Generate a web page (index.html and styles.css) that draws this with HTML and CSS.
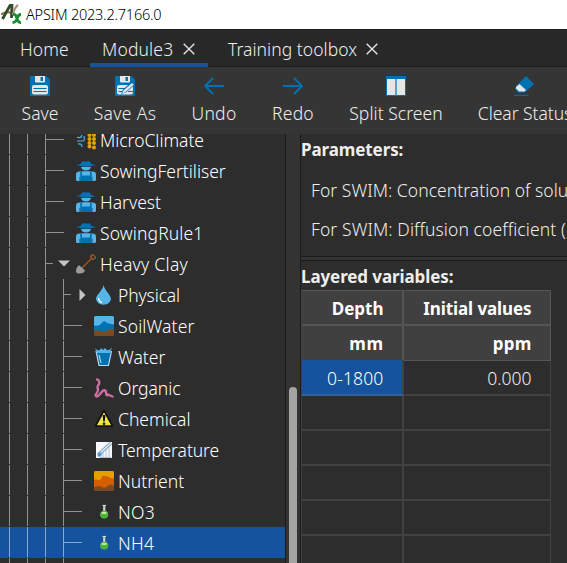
FILE: index.html
```html
<!DOCTYPE html>
<html lang="en">
<head>
<meta charset="utf-8">
<title>APSIM 2023.2.7166.0</title>
<link rel="stylesheet" href="styles.css">
</head>
<body>
<svg class="defs" width="0" height="0">
  <symbol id="farmer" viewBox="0 0 20 20">
    <path d="M0 13.500Q0 10.500 3.500 10.500L7 10.200H13L16.500 10.500Q20 10.500 20 13.500V18.500Q20 20 18.500 20H1.500Q0 20 0 18.500Z" fill="#56b4e9"/>
    <path d="M4.300 10.500H6V14.500H14V10.500H15.700V20H4.300Z" fill="#0072b2"/>
    <path d="M3.800 16V20M16.200 16V20" stroke="#2d2d2d" stroke-width=".6"/>
    <path d="M5 6H15Q14 9.600 10 9.600Q6 9.600 5 6Z" fill="#56b4e9"/>
    <path d="M0 4Q4 3.800 5 2.500Q5.300 .500 7 .300L10 .600L13 .300Q14.700 .500 15 2.500Q16 3.800 20 4Q15 5.700 10 5.700Q5 5.700 0 4Z" fill="#0072b2"/>
  </symbol>
  <symbol id="flask" viewBox="0 0 20 20">
    <path d="M9 3.500H11.500V8.500Q14.500 10 14.300 12.800Q14 16.500 10.200 16.500Q6.200 16.500 6 12.800Q6 10 9 8.500Z" fill="#8c9c91"/>
    <circle cx="10.200" cy="12.600" r="3.600" fill="#43b92c"/>
    <path d="M7.300 10.500Q10 9 13 10.500L12 12H8Z" fill="#baf095"/>
    <path d="M8.500 3.500H12" stroke="#d4d8db" stroke-width="1.200"/>
    <path d="M10.200 4.500V8.500" stroke="#d4d8db" stroke-width="1.600"/>
  </symbol>
  <symbol id="close" viewBox="0 0 12 12"><path d="M.700 .700 11.300 11.300M11.300 .700 .700 11.300" stroke="#e3e3e3" stroke-width="1.400"/></symbol>
</svg>
<div class="window">
  <header class="titlebar">
    <svg class="logo" viewBox="0 0 20 20"><path d="M0 10.500Q5 7 12 9" fill="none" stroke="#8d6b4b" stroke-width="2"/><path d="M1.500 15 9 1.500 11 .500 10.500 14" fill="none" stroke="#354a29" stroke-width="2.800"/><path d="M17 1Q13 4 12 11" fill="none" stroke="#a5947c" stroke-width="2.200"/><path d="M12 10.500Q15 10 16 14.500T20 18.500M20 10.500Q17 10.500 16 14.500T11.500 18.500" fill="none" stroke="#198c35" stroke-width="2.800"/></svg>
    <span class="t-app">APSIM 2023.2.7166.0</span>
  </header>
  <nav class="tabs">
    <div class="tab home"><span class="t-home">Home</span></div>
    <div class="tab active"><span class="t-mod">Module3</span><svg class="x"><use href="#close"/></svg></div>
    <div class="tab"><span class="t-train">Training toolbox</span><svg class="x"><use href="#close"/></svg></div>
  </nav>
  <div class="toolbar">
    <div class="tool save"><svg viewBox="0 0 20 20"><path d="M1 0H16.500L20 3.500V19Q20 20 19 20H1Q0 20 0 19V1Q0 0 1 0Z" fill="#0072b2"/><path d="M5 0H15V5.500Q15 6.500 14 6.500H6Q5 6.500 5 5.500Z" fill="#e6e6e6"/><path d="M10.500 1H13V5H10.500Z" fill="#0072b2"/><rect x="2" y="9" width="16" height="9.500" rx="2" fill="#e6e6e6"/><path d="M3.500 12.500H16.500M3.500 15.500H16.500" stroke="#0072b2" stroke-width="1"/></svg><span class="t-save">Save</span></div>
    <div class="tool saveas"><svg viewBox="0 0 20 20"><path d="M1 0H16.500L20 3.500V19Q20 20 19 20H1Q0 20 0 19V1Q0 0 1 0Z" fill="#0072b2"/><path d="M5 0H15V5.500Q15 6.500 14 6.500H6Q5 6.500 5 5.500Z" fill="#e6e6e6"/><path d="M10.500 1H13V5H10.500Z" fill="#0072b2"/><rect x="2" y="9" width="16" height="9.500" rx="2" fill="#e6e6e6"/><path d="M3.500 12.500H12M3.500 15.500H9M13 15.500H18" stroke="#0072b2"/><path d="M6 18 8 13.500 17 5.500 20 8.500 11 16.500Z" fill="#0072b2"/><path d="M7 17.500 8.500 14.500 17 7 18.700 8.700 10 16.500Z" fill="#e6e6e6"/></svg><span class="t-saveas">Save As</span></div>
    <div class="tool undo"><svg viewBox="0 0 20 20"><path d="M20 10H1M9 2 1 10 9 18" fill="none" stroke="#0072b2" stroke-width="1.800"/></svg><span class="t-undo">Undo</span></div>
    <div class="tool redo"><svg viewBox="0 0 20 20"><path d="M0 10H19M11 2 19 10 11 18" fill="none" stroke="#0072b2" stroke-width="1.800"/></svg><span class="t-redo">Redo</span></div>
    <div class="tool split"><svg viewBox="0 0 20 20"><rect width="20" height="20" rx="1" fill="#0072b2"/><path d="M1 3H19V19H1Z" fill="#e6e6e6"/><path d="M10 3V19" stroke="#5aa0cb" stroke-width="2"/></svg><span class="t-split">Split Screen</span></div>
    <div class="tool clear"><svg viewBox="0 0 20 20"><path d="M2 10 12 0 20 8 11 16.500H4L1 13Z" fill="#0072b2"/><path d="M5.500 8 12 14 10.500 15.500H5L2 12.500V11Z" fill="#e6e6e6"/><path d="M0 19.300H14.500" stroke="#0072b2"/></svg><span class="t-clear">Clear Status</span></div>
  </div>
  <main class="main">
    <div class="tree">
      <div class="row l3"><i class="branch"></i><svg viewBox="0 0 20 20"><path d="M1 7Q5 9 6 5M1 11H7Q9 11 8 6M2 14Q6 13 6 17" fill="none" stroke="#56b4e9" stroke-width="1.200"/><g fill="#e69f00"><circle cx="13.500" cy="5" r="2"/><circle cx="18" cy="5" r="2"/><circle cx="13.500" cy="9" r="2"/><circle cx="18" cy="9" r="2"/><circle cx="13.500" cy="13" r="2"/><circle cx="18" cy="13" r="2"/><circle cx="13.500" cy="16.500" r="2"/><circle cx="18" cy="17.500" r="2"/></g></svg><span class="t-micro">MicroClimate</span></div>
      <div class="row l3"><i class="branch"></i><svg><use href="#farmer"/></svg><span class="t-sf">SowingFertiliser</span></div>
      <div class="row l3"><i class="branch"></i><svg><use href="#farmer"/></svg><span class="t-harv">Harvest</span></div>
      <div class="row l3"><i class="branch"></i><svg><use href="#farmer"/></svg><span class="t-sr">SowingRule1</span></div>
      <div class="row l3 parent"><i class="branch short"></i><svg class="arrow" viewBox="0 0 12 7"><path d="M0 .500H12L6 6.500Z" fill="#c5c5c3"/></svg><svg viewBox="0 0 20 20"><path d="M6 14 16 4M14 2.500 17.500 6M14.500 3.500Q16 0 17 1Q20 3 19.500 4Q18 5 16.500 5" fill="none" stroke="#9a5724" stroke-width="1.500"/><path d="M3 11 9 16.500Q8 20 2 19.500Q0 19 0 17Q.500 13 3 11Z" fill="#9b9b9b"/></svg><span class="t-heavy">Heavy Clay</span></div>
      <div class="row l4 parent"><i class="branch short"></i><svg class="arrow right" viewBox="0 0 7 12"><path d="M.500 0V12L6.500 6Z" fill="#c5c5c3"/></svg><svg viewBox="0 0 20 20"><path d="M9.700 0Q10 3 14 8Q17 12 17 14Q16 19.700 9.500 19.700Q3 19.500 2 14Q2 11 6 7Q9 3 9.700 0Z" fill="#56b4e9"/><path d="M4.500 13Q5 17 8 17.500" stroke="#fff" stroke-width="1.500" fill="none"/></svg><span class="t-phys">Physical</span></div>
      <div class="row l4"><i class="branch"></i><svg viewBox="0 0 20 20"><rect width="20" height="20" rx="2" fill="#0072b2"/><path d="M0 9.500V2Q0 0 2 0H18Q20 0 20 2V8Q18 9 16 7.500Q14 8 12 6Q9 4 7 8Q5 10.500 0 9.500Z" fill="#56b4e9"/><path d="M0 15Q4 13.500 8 15Q11 17 14 13.500Q17 12 20 14V18Q20 20 18 20H2Q0 20 0 18Z" fill="#784b22"/></svg><span class="t-soil">SoilWater</span></div>
      <div class="row l4"><i class="branch"></i><svg viewBox="0 0 20 20"><path d="M2 4 5 18.500H14.500L17.500 4" fill="#0072b2" stroke="#bcdced" stroke-width="1.200"/><path d="M1 1Q3 4 6 3L7 1 9 3 11 1 13 3Q16 4 18 0L16 6H3Z" fill="#56b4e9"/><path d="M5 8 7 16" stroke="#9dd5f3" stroke-width="1.200"/></svg><span class="t-water">Water</span></div>
      <div class="row l4"><i class="branch"></i><svg viewBox="0 0 20 20"><path d="M3 1.500Q6 2 5 6Q2.500 9 4 11Q4.500 13 1.500 17Q2 19.500 4 18Q8 14 8.500 13Q11 11 12 14Q12 19 14 16.500Q15 17 18.500 18.500" fill="none" stroke="#cc6ea0" stroke-width="2.400" stroke-linecap="round"/></svg><span class="t-org">Organic</span></div>
      <div class="row l4"><i class="branch"></i><svg viewBox="0 0 20 20"><path d="M10 1.500 18.500 17H1.500Z" fill="#f0e442" stroke="#111" stroke-width="1.600" stroke-linejoin="round"/><path d="M8.600 6H11.400L10.700 12.500H9.300Z" fill="#111"/><circle cx="10" cy="14.800" r="1.300" fill="#111"/></svg><span class="t-chem">Chemical</span></div>
      <div class="row l4"><i class="branch"></i><svg viewBox="0 0 20 20"><path d="M2 2H18V18H2Z" fill="#f6f8fa"/><path d="M9 10V18M12 8V18M15 6V18M6 17.500H17" stroke="#9eb4ca" stroke-width=".8"/><path d="M5.500 13.500 17 3" stroke="#7c9db7" stroke-width="3.200"/><path d="M6 13 17 3" stroke="#e1f0fa" stroke-width="1.500"/><circle cx="5.500" cy="14.500" r="2.200" fill="#4e9ad2"/></svg><span class="t-temp">Temperature</span></div>
      <div class="row l4"><i class="branch"></i><svg viewBox="0 0 20 20"><rect width="20" height="20" rx="2" fill="#d55e00"/><path d="M0 9V2Q0 0 2 0H18Q20 0 20 2V7Q17 8 15 6Q13 5 11 5Q8 4 7 8Q5 10 3 8.500Q2 8 0 9Z" fill="#e69f00"/><path d="M0 16Q4 14.500 8 16Q11 18 15 14Q17 13 20 15V18Q20 20 18 20H2Q0 20 0 18Z" fill="#784b22"/></svg><span class="t-nut">Nutrient</span></div>
      <div class="row l4"><i class="branch"></i><svg><use href="#flask"/></svg><span class="t-no3">NO3</span></div>
      <div class="row l4 selected"><i class="branch"></i><svg><use href="#flask"/></svg><span class="t-nh4">NH4</span></div>
      <div class="row l4 next"></div>
    </div>
    <div class="scroll"><div class="thumb"></div></div>
    <section class="detail">
      <div class="params">
        <h2><span class="t-par">Parameters:</span></h2>
        <p><span class="t-conc">For SWIM: Concentration of solu</span></p>
        <p><span class="t-diff">For SWIM: Diffusion coefficient (</span></p>
      </div>
      <div class="divider"></div>
      <h2 class="lay"><span class="t-lay">Layered variables:</span></h2>
      <div class="grid">
        <div class="cell head"><span class="t-depth">Depth</span></div><div class="cell head"><span class="t-init">Initial values</span></div>
        <div class="cell head unit"><span class="t-mm">mm</span></div><div class="cell head unit"><span class="t-ppm">ppm</span></div>
        <div class="cell picked"><span class="t-018">0-1800</span></div><div class="cell value"><span class="t-000">0.000</span></div>
        <div class="cell"></div><div class="cell"></div>
        <div class="cell"></div><div class="cell"></div>
        <div class="cell"></div><div class="cell"></div>
        <div class="cell"></div><div class="cell"></div>
        <div class="cell"></div><div class="cell"></div>
      </div>
    </section>
  </main>
</div>
</body>
</html>
```
FILE: styles.css
```css
* { box-sizing: border-box; }
body { margin: 0; background: #2d2d2d; }
.window {
  width: 567px; height: 563px; overflow: hidden;
  display: flex; flex-direction: column;
  font: 350 17.500px/24px "Noto Sans", "Open Sans", sans-serif;
  color: #eeeeec; white-space: nowrap;
}
.defs { display: none; }
svg { flex: none; display: block; }
.titlebar { height: 29px; flex: none; background: #fff; color: #000; display: flex; align-items: center; padding-left: 1px; gap: 5px; font-size: 14.500px; border-bottom: 1px solid #fff; }
.logo { width: 20px; height: 20px; }

.tabs { height: 38px; flex: none; display: flex; background: #282828; border-top: 1px solid #1b1b1b; border-bottom: 1px solid #1b1b1b; }
.tab { display: flex; align-items: center; height: 37px; padding: 0 12px; gap: 10px; width: 118px; flex: none; }
.tab.home { width: 90px; padding-left: 20px; }
.tab + .tab + .tab { padding-left: 20px; width: 190px; }
.tab.active { border-bottom: 4px solid #15539e; padding-top: 4px; }
.tab .x { width: 12px; height: 12px; }
.tab span { width: 71px; }
.tab + .tab + .tab span { width: 128px; }

.toolbar { height: 67px; flex: none; background: #353535; display: flex; padding-left: 10px; }
.tool { display: flex; flex-direction: column; align-items: center; flex: none; padding-top: 9px; gap: 5px; }
.tool svg { width: 20px; height: 20px; }
.save { width: 60px; } .saveas { width: 110px; } .undo { width: 68px; } .redo { width: 90px; } .split { width: 116px; } .clear { width: 140px; }

/* text tracking */
.t-app { letter-spacing: -.22px; }
.t-home, .t-mod { letter-spacing: .15px; }
.t-train { letter-spacing: .05px; }
.t-saveas { letter-spacing: .35px; }
.t-undo { letter-spacing: .3px; }
.t-redo { letter-spacing: .2px; }
.t-split { letter-spacing: .05px; }
.t-clear { letter-spacing: -.05px; padding-left: 2px; }
.t-micro { letter-spacing: -.02px; }
.t-heavy { letter-spacing: .28px; }
.t-sr, .t-soil { letter-spacing: .13px; }
.t-phys { letter-spacing: -.12px; }
.t-temp { letter-spacing: -.08px; }
.t-org { letter-spacing: -.05px; }
.t-nh4, .t-no3 { letter-spacing: .3px; }
.t-par, .t-lay { letter-spacing: -.1px; }
.t-conc { letter-spacing: .04px; }
.t-diff { letter-spacing: .09px; }
.t-018 { letter-spacing: .15px; }
.t-mm { letter-spacing: .5px; }
.t-ppm { letter-spacing: .2px; }

.main { flex: 1; min-height: 0; display: flex; }
.tree { width: 285px; flex: none; overflow: hidden; display: flex; flex-direction: column; justify-content: flex-end; height: 455px; margin-top: -26px; clip-path: inset(26px 0 0 0); color: #fff; }
.row {
  --guide: #929292;
  height: 31px; flex: none; display: flex; align-items: center;
  background: linear-gradient(var(--guide), var(--guide)) 9px 0/1px 30px no-repeat, linear-gradient(var(--guide), var(--guide)) 27px 0/1px 30px no-repeat, linear-gradient(var(--guide), var(--guide)) 45px 0/1px 30px no-repeat;
}
.row.l4 { background: linear-gradient(var(--guide), var(--guide)) 9px 0/1px 30px no-repeat, linear-gradient(var(--guide), var(--guide)) 27px 0/1px 30px no-repeat, linear-gradient(var(--guide), var(--guide)) 45px 0/1px 30px no-repeat, linear-gradient(var(--guide), var(--guide)) 63px 0/1px 30px no-repeat; }
.row.l4.selected { --guide: #8aa9cf; background-color: #15539e; }
.row.next { height: 5px; }
.row svg { width: 20px; height: 20px; margin-right: 4px; }
.branch { width: 18px; height: 1px; background: var(--guide); margin: 0 12px 0 46px; flex: none; }
.l4 .branch { margin-left: 64px; }
.branch.short { width: 7px; margin-right: 5px; }
.l4 .branch.short { margin-right: 8px; }
.row .arrow { width: 12px; height: 7px; margin-right: 6px; }
.row .arrow.right { width: 7px; height: 12px; margin-right: 8px; }

.scroll { width: 16px; flex: none; background: #333; border-left: 1px solid #1b1b1b; border-right: 1px solid #1b1b1b; padding: 253px 3px 0; }
.thumb { width: 8px; height: 100%; background: #a4a4a3; border-radius: 4px 4px 0 0; }

.detail { flex: 1; min-width: 0; overflow: hidden; }
.params { height: 122px; }
h2 { margin: 0; font-size: 17px; font-weight: 700; line-height: 24px; padding-top: 4px; }
.params p { margin: 0; padding-left: 10px; height: 39px; line-height: 24px; }
.params h2 + p { margin-top: 16px; }
.divider { height: 5px; background: #333; border-top: 1px solid #1b1b1b; border-bottom: 1px solid #1b1b1b; }
h2.lay { height: 29px; }
.grid { width: 250px; display: grid; grid-template-columns: 102px 147px; grid-auto-rows: 35px; border-top: 1px solid #555; border-left: 1px solid #424242; }
.cell { border-right: 2px solid #424242; border-bottom: 2px solid #424242; display: flex; align-items: center; justify-content: flex-end; padding: 2px 18.500px 0 0; }
.cell:nth-child(even) { border-right-width: 1px; }
.head { background: #404040; border-color: #555; font-weight: 700; color: #fff; font-size: 17px; }
.t-init { letter-spacing: -.1px; }
.unit { border-bottom-width: 1px; padding-top: 1px; }
.picked { background: #15539e; border-color: #33639e; border-right-color: #424242; color: #fff; margin-top: -1px; padding-top: 1px; }
.value { padding-top: 0; }
```
